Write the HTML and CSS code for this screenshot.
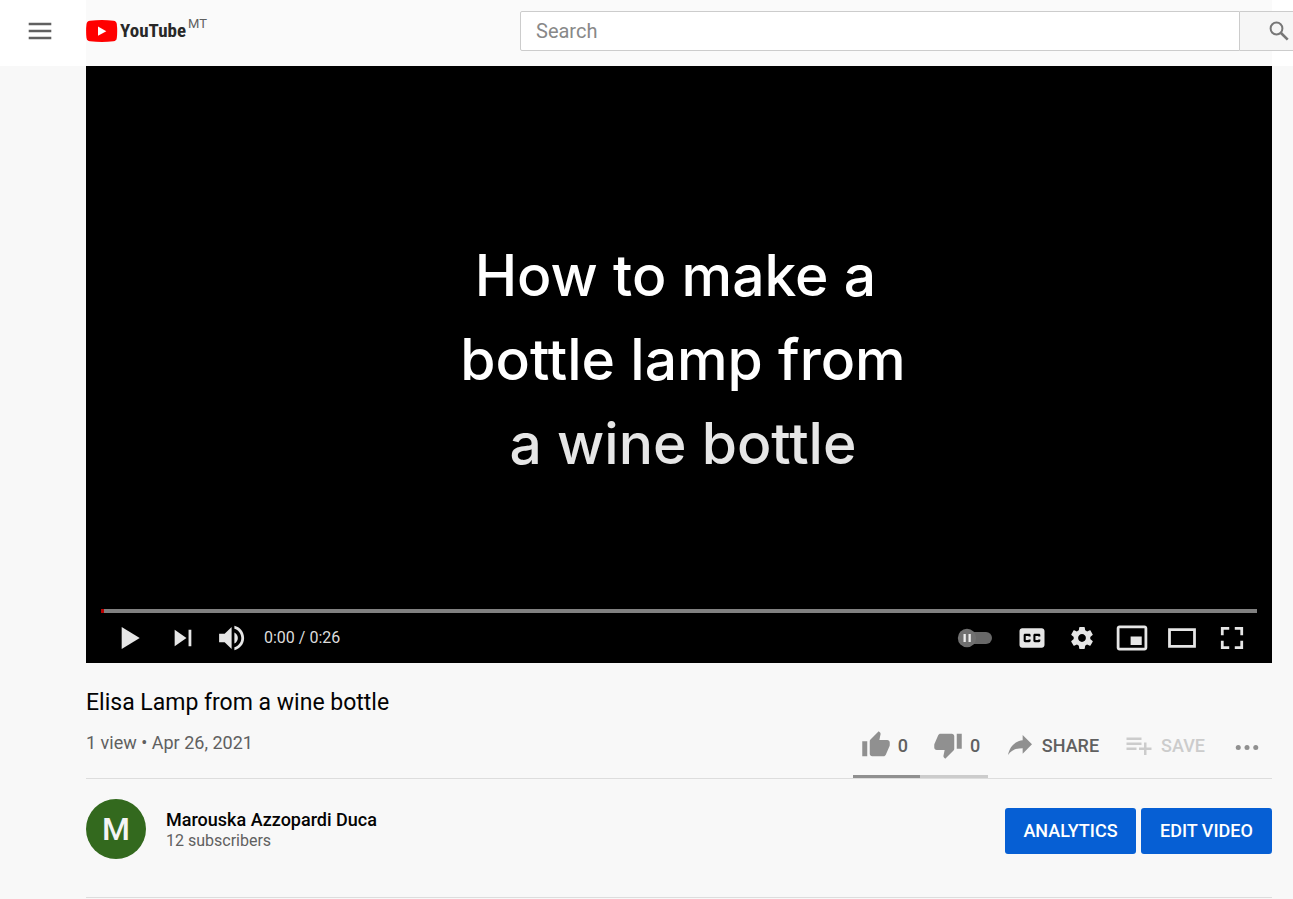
FILE: index.html
```html
<!DOCTYPE html>
<html lang="en">
<head>
<meta charset="utf-8">
<title>Elisa Lamp from a wine bottle - YouTube</title>
<meta name="viewport" content="width=device-width, initial-scale=1">
<link rel="stylesheet" href="styles.css">
</head>
<body>
<header class="masthead">
  <div class="menu-cell">
    <button class="icon-button" type="button" aria-label="Menu">
      <svg width="24" height="18" viewBox="0 0 24 18"><path fill="#606060" d="M.700.800h22.600v2.400H.700zM.700 7.800h22.600v2.400H.700zM.700 14.800h22.600v2.400H.700z"/></svg>
    </button>
  </div>
  <div class="masthead-main">
    <a class="logo" href="#" aria-label="YouTube home">
      <svg class="logo-mark" width="32" height="22" viewBox="0 0 32 22"><path fill="#f00" d="M4 .7Q16-.6 27.500.7 30.400 1.100 30.800 4 31.600 11 30.800 18 30.400 20.900 27.500 21.300 16 22.600 4 21.300.900 20.900.500 18-.3 11 .5 4 .9 1.100 4 .7z"/><path fill="#fff" d="M12 6.500v9.300l8.300-4.600z"/></svg>
      <span class="logo-text">YouTube</span>
      <span class="logo-country">MT</span>
    </a>
    <form class="search" role="search">
      <input class="search-input" type="text" placeholder="Search" aria-label="Search">
      <button class="search-button" type="button" aria-label="Submit search">
        <svg width="20" height="20" viewBox="0 0 20 20" fill="none" stroke="#777" stroke-width="2"><circle cx="7.500" cy="7.500" r="5.900"/><path d="M12 12l6.700 6.700" stroke-width="2.600"/></svg>
      </button>
    </form>
  </div>
</header>

<main class="watch">
  <section class="player" aria-label="Video player">
    <div class="frame">
      <p class="caption">How to make a 
bottle lamp from
<span class="caption-last">a wine bottle</span></p>
    </div>
    <div class="chrome">
      <input class="seek" type="range" min="0" max="26" value="0" aria-label="Seek">
      <div class="controls">
        <button class="control play" type="button" aria-label="Play"><svg viewBox="0 0 36 36"><path d="M12 10v16l13-8z"/></svg></button>
        <button class="control" type="button" aria-label="Next"><svg viewBox="0 0 36 36"><path d="M12 24l8.500-6L12 12zM22 12v12h2V12z"/></svg></button>
        <button class="control" type="button" aria-label="Mute"><svg viewBox="0 0 36 36"><path d="M8 21h4l5 5V10l-5 5H8zM19 14v8c1.480-.68 2.500-2.230 2.500-4S20.480 14.740 19 14zM19 11.290c2.890.86 5 3.540 5 6.710s-2.110 5.850-5 6.710v2.060c4.010-.91 7-4.490 7-8.770s-2.990-7.860-7-8.770z"/></svg></button>
        <span class="time">0:00 / 0:26</span>
        <button class="control autoplay" type="button" aria-label="Autoplay"><svg class="autoplay-icon" viewBox="0 0 36 20"><rect x="10" y="4" width="25" height="12" rx="6" fill="#686868"/><circle cx="10" cy="10" r="9.200" fill="#707070"/><path fill="#eee" d="M6.500 6h2.300v8H6.500zM11.500 6h2.300v8h-2.300z"/></svg></button>
        <button class="control" type="button" aria-label="Subtitles"><svg viewBox="0 0 36 36"><path fill-rule="evenodd" d="M11 11c-1.110 0-2 .9-2 2v10c0 1.100.89 2 2 2h14c1.100 0 2-.9 2-2V13c0-1.100-.9-2-2-2zM17 17h-1.500v-.5h-2v3h2V19H17v1c0 .550-.45 1-1 1h-3c-.55 0-1-.45-1-1v-4c0-.55.45-1 1-1h3c.55 0 1 .45 1 1zM24 17h-1.500v-.5h-2v3h2V19H24v1c0 .55-.45 1-1 1h-3c-.55 0-1-.45-1-1v-4c0-.55.45-1 1-1h3c.55 0 1 .45 1 1z"/></svg></button>
        <button class="control" type="button" aria-label="Settings"><svg viewBox="0 0 36 36"><path d="m23.940 18.780c.03-.25.05-.51.05-.78 0-.27-.02-.52-.05-.78l1.680-1.320c.15-.12.19-.33.09-.51l-1.600-2.760c-.09-.17-.31-.24-.48-.17l-1.990.8c-.41-.32-.86-.58-1.350-.78l-.3-2.120c-.02-.19-.19-.33-.39-.33l-3.200 0c-.2 0-.36.14-.39.33l-.3 2.120c-.48.2-.93.47-1.350.78l-1.990-.8c-.18-.07-.39 0-.48.17l-1.600 2.760c-.1.17-.05.39.09.51l1.680 1.320c-.03.25-.05.52-.05.78 0 .26.02.52.05.78l-1.680 1.320c-.15.12-.19.33-.09.51l1.600 2.760c.09.17.31.24.48.17l1.990-.8c.41.32.86.58 1.350.78l.3 2.120c.02.19.19.33.39.33l3.200 0c.2 0 .36-.14.39-.33l.3-2.120c.48-.2.93-.47 1.350-.78l1.990.8c.18.07.39 0 .48-.17l1.600-2.760c.09-.17.05-.39-.09-.51zm-5.940 2.010c-1.540 0-2.800-1.250-2.800-2.800 0-1.540 1.250-2.800 2.800-2.800 1.540 0 2.800 1.250 2.800 2.800 0 1.540-1.250 2.800-2.800 2.800z"/></svg></button>
        <button class="control" type="button" aria-label="Miniplayer"><svg viewBox="0 0 36 36"><path fill-rule="evenodd" d="M25 17h-8v6h8zM29 25V11c0-1.100-.9-2-2-2H9c-1.100 0-2 .9-2 2v14c0 1.100.9 2 2 2h18c1.100 0 2-.9 2-2zM27 25H9V11h18z"/></svg></button>
        <button class="control" type="button" aria-label="Theater mode"><svg viewBox="0 0 36 36"><path fill-rule="evenodd" d="M28 11v14H8V11zM10 13v10h16V13z"/></svg></button>
        <button class="control" type="button" aria-label="Full screen"><svg viewBox="0 0 36 36"><path d="M10 16h2v-4h4v-2h-6zM20 10v2h4v4h2v-6zM24 24h-4v2h6v-6h-2zM12 20h-2v6h6v-2h-4z"/></svg></button>
      </div>
    </div>
  </section>

  <section class="info">
    <h1 class="title">Elisa Lamp from a wine bottle</h1>
    <div class="info-row">
      <p class="meta">1 view • Apr 26, 2021</p>
      <div class="actions">
        <div class="rating">
          <button class="action" type="button" aria-label="Like, 0"><svg viewBox="0 0 24 24"><path d="M1 21h4V9H1v12zm22-11c0-1.100-.9-2-2-2h-6.310l.95-4.570.03-.32c0-.41-.17-.79-.44-1.060L14.170 1 7.590 7.590C7.220 7.950 7 8.450 7 9v10c0 1.100.9 2 2 2h9c.83 0 1.540-.5 1.840-1.220l3.020-7.050c.09-.23.14-.47.14-.73v-2z"/></svg><span>0</span></button>
          <button class="action" type="button" aria-label="Dislike, 0"><svg viewBox="0 0 24 24"><path d="M15 3H6c-.83 0-1.540.5-1.840 1.220l-3.020 7.050c-.09.23-.14.47-.14.73v2c0 1.100.9 2 2 2h6.310l-.95 4.570-.03.32c0 .41.17.79.44 1.060L9.830 23l6.590-6.590c.36-.36.58-.86.58-1.410V5c0-1.100-.9-2-2-2zm4 0v12h4V3h-4z"/></svg><span>0</span></button>
        </div>
        <button class="action share" type="button"><svg viewBox="0 0 24 24"><path d="M11.730 8.270V4l7.470 7.470-7.470 7.460v-4.370C6.400 14.560 2.670 16.270 0 20c1.070-5.330 4.270-10.670 11.730-11.730z"/></svg><span>SHARE</span></button>
        <button class="action save" type="button" disabled><svg viewBox="0 0 24 24"><path d="M14 10H2v2h12v-2zm0-4H2v2h12V6zm4 8v-4h-2v4h-4v2h4v4h2v-4h4v-2h-4zM2 16h8v-2H2v2z"/></svg><span>SAVE</span></button>
        <button class="action more" type="button" aria-label="More actions"><svg viewBox="0 0 24 24"><circle cx="5" cy="14" r="2"/><circle cx="12" cy="14" r="2"/><circle cx="19" cy="14" r="2"/></svg></button>
      </div>
    </div>
  </section>

  <section class="owner">
    <a class="avatar" href="#" aria-label="Channel">M</a>
    <div class="owner-text">
      <a class="owner-name" href="#">Marouska Azzopardi Duca</a>
      <span class="owner-subs">12 subscribers</span>
    </div>
    <div class="owner-buttons">
      <button class="primary" type="button">ANALYTICS</button>
      <button class="primary" type="button">EDIT VIDEO</button>
    </div>
  </section>
</main>
</body>
</html>
```

FILE: styles.css
```css
* {
  box-sizing: border-box;
}

body {
  margin: 0;
  background: #f8f8f8;
  color: #030303;
  font-family: Roboto, "Liberation Sans", sans-serif;
}

button {
  margin: 0;
  padding: 0;
  border: 0;
  background: none;
  font: inherit;
}

a {
  color: inherit;
  text-decoration: none;
}

svg {
  display: block;
}

/* Top bar */
.masthead {
  display: grid;
  grid-template-columns: 86px 1fr;
  height: 66px;
  background: #fff;
}

.menu-cell {
  padding: 22px 28px;
}

.masthead-main {
  display: flex;
  align-items: flex-start;
  min-width: 0;
  background: linear-gradient(to left, #fff 21px, #fafafa 21px);
}

.logo {
  display: flex;
  align-items: flex-start;
  width: 434px;
  padding-top: 16px;
}

.logo-mark {
  margin: 4px 2px 0 0;
}

.logo-text {
  color: #282828;
  font-family: "Roboto Condensed", "Liberation Sans Narrow", Roboto, sans-serif;
  font-size: 19px;
  font-weight: 700;
  line-height: 30px;
}

.logo-country {
  margin-left: 2px;
  color: #606060;
  font-size: 13px;
  line-height: 16px;
}

.search {
  display: flex;
  flex: 1;
  height: 40px;
  margin-top: 11px;
}

.search-input {
  flex: 1;
  min-width: 0;
  padding: 0 15px;
  border: 1px solid #ccc;
  border-radius: 2px 0 0 2px;
  background: #fff;
  color: #111;
  font: 20px/24px Roboto, "Liberation Sans", sans-serif;
}

.search-input::placeholder {
  color: #888;
  opacity: 1;
}

.search-button {
  display: flex;
  align-items: center;
  justify-content: flex-end;
  width: 53px;
  padding-right: 4px;
  border: solid #ccc;
  border-width: 1px 0;
  background: #f6f6f6;
}

/* Player */
.watch {
  padding: 0 21px 0 86px;
}

.player {
  display: flex;
  flex-direction: column;
  aspect-ratio: 1186 / 597;
  background: #000;
}

.frame {
  display: flex;
  flex: 1;
  align-items: center;
  justify-content: center;
  padding-top: 44px;
}

.caption {
  margin: 0;
  padding-left: 8px;
  color: #fff;
  font: 500 57px/84px Inter, "Liberation Sans", sans-serif;
  text-align: center;
  white-space: pre;
}

.caption-last {
  color: #e6e6e6;
}

.chrome {
  padding: 0 15px;
}

.seek {
  display: block;
  width: 100%;
  height: 4px;
  margin: 0;
  appearance: none;
  background: linear-gradient(to right, #b00 3px, #808080 3px);
}

.seek::-webkit-slider-thumb {
  width: 1px;
  height: 1px;
  appearance: none;
  background: transparent;
}

.controls {
  display: flex;
  align-items: center;
  height: 50px;
}

.control {
  width: 50px;
  height: 50px;
  fill: #e6e6e6;
}

.play {
  width: 57px;
  padding: 0 3px 0 4px;
}

.time {
  padding-left: 6px;
  color: #ddd;
  font-size: 16px;
  line-height: 20px;
}

.autoplay {
  width: 64px;
  margin-left: auto;
}

.autoplay-icon {
  width: 36px;
  height: 20px;
  margin: 0 auto 0 14px;
}

/* Title and actions */
.info {
  padding-top: 25px;
  border-bottom: 1px solid #ddd;
}

.title {
  margin: 0;
  font-size: 23px;
  font-weight: 400;
  line-height: 30px;
}

.info-row {
  display: flex;
  justify-content: space-between;
  height: 60px;
}

.meta {
  margin: 0;
  padding-top: 13px;
  color: #606060;
  font-size: 18px;
  line-height: 24px;
}

.actions {
  display: flex;
  align-items: flex-start;
}

.action {
  display: flex;
  align-items: center;
  height: 54px;
  color: #606060;
  font-size: 18px;
  font-weight: 500;
}

.action svg {
  flex: none;
  width: 30px;
  height: 30px;
  fill: #909090;
}

.rating {
  display: flex;
  gap: 25px;
  width: 135px;
  height: 60px;
  padding-left: 8px;
  background: linear-gradient(to right, #909090 50%, #ccc 50%) bottom / 100% 3px no-repeat;
}

.rating .action {
  gap: 7px;
}

.share {
  gap: 4px;
  margin-left: 20px;
}

.save {
  gap: 7px;
  margin-left: 25px;
  color: #ccc;
}

.save svg {
  fill: #ccc;
}

.more {
  margin: 0 10px 0 27px;
}

/* Channel */
.owner {
  display: flex;
  align-items: flex-start;
  height: 119px;
  padding-top: 20px;
  border-bottom: 1px solid #ddd;
}

.avatar {
  width: 60px;
  height: 60px;
  border-radius: 50%;
  background: #33691e;
  color: #f4f4f4;
  font-size: 32px;
  font-weight: 500;
  line-height: 60px;
  text-align: center;
}

.owner-text {
  display: flex;
  flex-direction: column;
  padding: 10px 0 0 20px;
}

.owner-name {
  font-size: 18px;
  font-weight: 500;
  line-height: 22px;
}

.owner-subs {
  color: #606060;
  font-size: 16px;
  line-height: 20px;
}

.owner-buttons {
  display: flex;
  gap: 5px;
  margin-left: auto;
  padding-top: 9px;
}

.primary {
  min-width: 131px;
  height: 46px;
  padding-bottom: 1px;
  border-radius: 3px;
  background: #065fd4;
  color: #fff;
  font-size: 18px;
  font-weight: 500;
}
```
